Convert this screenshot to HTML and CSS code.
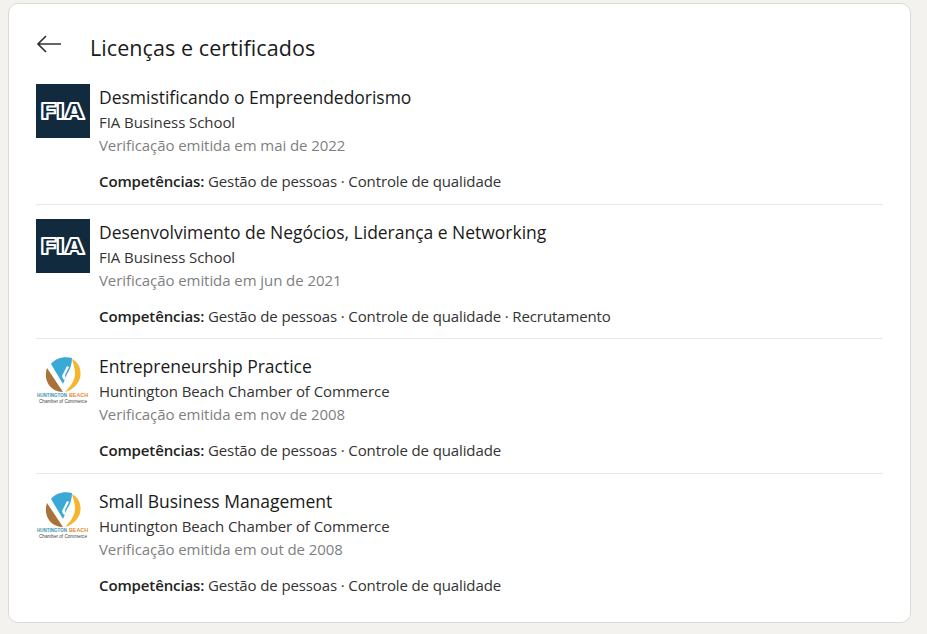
FILE: index.html
```html
<!DOCTYPE html>
<html lang="pt">
<head>
<meta charset="UTF-8">
<meta name="viewport" content="width=device-width, initial-scale=1.0">
<title>Licenças e certificados</title>
<link rel="stylesheet" href="styles.css">
</head>
<body>
<svg class="defs" width="0" height="0" aria-hidden="true">
  <defs>
    <symbol id="fia" viewBox="0 0 54 54">
      <rect width="54" height="54" fill="#112a3e"/>
      <text x="27" y="35" text-anchor="middle" textLength="44" lengthAdjust="spacingAndGlyphs" class="fia-text">FIA</text>
    </symbol>
    <symbol id="hbcc" viewBox="0 0 54 54">
      <rect width="54" height="54" fill="#fff"/>
      <path d="M15 11 C19 6 27 3 36 5 C36 11 34 17 31 21 L27 31 Z" fill="#3ba9d6"/>
      <path d="M36 6 C42 9 45 15 44.500 22 C44 30 37 37 29 39 C34 34 39 28 39 20 C39 15 37 10 36 6 Z" fill="#f5b52e"/>
      <path d="M11 15 C7 27 14 39 27 39 Z" fill="#a97238"/>
      <path d="M26 23 L31 13 L33 14 L29 22 L30 27 L27 26 Z" fill="#fff"/>
      <text x="1" y="44" textLength="30" lengthAdjust="spacingAndGlyphs" class="hb-text hb-blue">HUNTINGTON</text>
      <text x="33" y="44" textLength="19" lengthAdjust="spacingAndGlyphs" class="hb-text hb-orange">BEACH</text>
      <text x="3" y="50" textLength="48" lengthAdjust="spacingAndGlyphs" class="hb-sub">Chamber of Commerce</text>
    </symbol>
  </defs>
</svg>
<main class="card">
  <header class="card-header">
    <button class="back-btn" aria-label="Voltar">
      <svg width="26" height="20" viewBox="0 0 26 20">
        <path d="M25 10 H2 M10 2 L2 10 L10 18" fill="none" stroke="#333" stroke-width="1.700"/>
      </svg>
    </button>
    <h1>Licenças e certificados</h1>
  </header>
  <ul class="list">
    <li class="item">
      <svg class="logo"><use href="#fia"/></svg>
      <div class="info">
        <h2>Desmistificando o Empreendedorismo</h2>
        <p class="issuer">FIA Business School</p>
        <p class="date">Verificação emitida em mai de 2022</p>
        <p class="skills"><strong>Competências:</strong> Gestão de pessoas · Controle de qualidade</p>
      </div>
    </li>
    <li class="item">
      <svg class="logo"><use href="#fia"/></svg>
      <div class="info">
        <h2>Desenvolvimento de Negócios, Liderança e Networking</h2>
        <p class="issuer">FIA Business School</p>
        <p class="date">Verificação emitida em jun de 2021</p>
        <p class="skills"><strong>Competências:</strong> Gestão de pessoas · Controle de qualidade · Recrutamento</p>
      </div>
    </li>
    <li class="item">
      <svg class="logo"><use href="#hbcc"/></svg>
      <div class="info">
        <h2>Entrepreneurship Practice</h2>
        <p class="issuer">Huntington Beach Chamber of Commerce</p>
        <p class="date">Verificação emitida em nov de 2008</p>
        <p class="skills"><strong>Competências:</strong> Gestão de pessoas · Controle de qualidade</p>
      </div>
    </li>
    <li class="item">
      <svg class="logo"><use href="#hbcc"/></svg>
      <div class="info">
        <h2>Small Business Management</h2>
        <p class="issuer">Huntington Beach Chamber of Commerce</p>
        <p class="date">Verificação emitida em out de 2008</p>
        <p class="skills"><strong>Competências:</strong> Gestão de pessoas · Controle de qualidade</p>
      </div>
    </li>
  </ul>
</main>
</body>
</html>
```

FILE: styles.css
```css
html, body {
  height: 100%;
}

body {
  font-family: "Open Sans", "Noto Sans", Arial, sans-serif;
  background-color: #f3f2ef;
  color: #1a1a1a;
  margin: 0;
  padding: 3px 16px 0 8px;
  box-sizing: border-box;
  overflow: hidden;
}

.defs {
  display: block;
  height: 0;
}

.fia-text {
  font-family: Inter, "Liberation Sans", sans-serif;
  font-size: 22px;
  font-weight: 900;
  fill: #112a3e;
  stroke: #fff;
  stroke-width: 1.800px;
  stroke-linejoin: round;
}

.hb-text {
  font-family: "Liberation Sans", Arial, sans-serif;
  font-size: 4.500px;
  font-weight: bold;
}

.hb-blue {
  fill: #3c93ad;
}

.hb-orange {
  fill: #e08a35;
}

.hb-sub {
  font-family: "Liberation Sans", Arial, sans-serif;
  font-size: 5.500px;
  fill: #444;
}

.card {
  background-color: #fff;
  border: 1px solid #dcdad6;
  border-radius: 10px;
  height: 620px;
  box-sizing: border-box;
  padding: 0 27px;
}

.card-header {
  display: flex;
  align-items: center;
  height: 80px;
}

.back-btn {
  background: none;
  border: none;
  padding: 0;
  width: 54px;
  height: 20px;
  text-align: left;
  cursor: pointer;
}

h1 {
  margin: 7px 0 0;
  font-size: 21.500px;
  font-weight: 500;
  letter-spacing: 0.080px;
  line-height: 28px;
}

.list {
  list-style: none;
  margin: 0;
  padding: 0;
}

.item {
  display: flex;
  height: 119.500px;
  margin-bottom: 14px;
  border-bottom: 1px solid #e8e8e8;
}

.item:last-child {
  border-bottom: none;
}

.logo {
  width: 54px;
  height: 54px;
  flex-shrink: 0;
}

.info {
  margin-left: 9px;
}

h2 {
  margin: 1px 0 0;
  font-size: 17.500px;
  font-weight: 500;
  line-height: 24px;
  letter-spacing: -0.020px;
}

p {
  margin: 0;
  font-size: 15px;
  line-height: 23px;
  letter-spacing: -0.070px;
}

.issuer {
  margin-top: 2px;
  color: #333;
}

.date {
  color: #7f7f7f;
}

.skills {
  margin-top: 13px;
  color: #333;
  letter-spacing: -0.120px;
}

.skills strong {
  font-weight: 600;
  color: #222;
}
```
